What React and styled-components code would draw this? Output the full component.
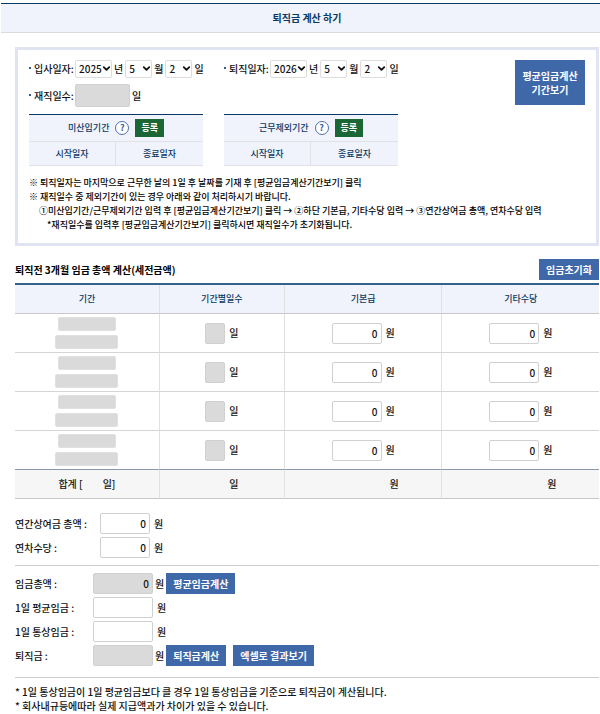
import React from "react";
import styled, { createGlobalStyle } from "styled-components";
import { ChevronDown } from "lucide-react";

const periodRows = [1, 2, 3, 4];

function DateSelect({ id, label, value, wide }) {
  return (
    <SelectWrap $wide={wide}>
      <Select id={id} aria-label={label} defaultValue={value}>
        <option>{value}</option>
      </Select>
      <ChevronDown size={11} strokeWidth={4} />
    </SelectWrap>
  );
}

function DateField({ id, label, year, month, day }) {
  return (
    <Field>
      <FieldLabel htmlFor={id}>{label}:</FieldLabel>
      <DateSelect id={id} value={year} wide />
      <DateUnit>년</DateUnit>
      <DateSelect label={`${label} 월`} value={month} />
      <DateUnit>월</DateUnit>
      <DateSelect label={`${label} 일`} value={day} />
      <DateUnit>일</DateUnit>
    </Field>
  );
}

function ExcludeTable({ title }) {
  return (
    <MiniTable>
      <thead>
        <tr>
          <th colSpan={2}>
            <MiniTitle>
              {title}
              <HelpButton type="button" aria-label={`${title} 도움말`}>?</HelpButton>
              <GreenButton type="button">등록</GreenButton>
            </MiniTitle>
          </th>
        </tr>
        <tr>
          <th>시작일자</th>
          <th>종료일자</th>
        </tr>
      </thead>
    </MiniTable>
  );
}

function App() {
  return (
    <>
      <GlobalStyle />
      <TitleBar>퇴직금 계산 하기</TitleBar>
      <Content>
        <InfoBox>
          <InfoTop>
            <Dates>
              <DateField id="join" label="입사일자" year="2025" month="5" day="2" />
              <DateField id="leave" label="퇴직일자" year="2026" month="5" day="2" />
              <Field>
                <FieldLabel htmlFor="days">재직일수:</FieldLabel>
                <DaysInput id="days" $width="55px" readOnly />
                <DateUnit>일</DateUnit>
              </Field>
            </Dates>
            <BigButton type="button">
              평균임금계산
              <br />
              기간보기
            </BigButton>
          </InfoTop>
          <MiniTables>
            <ExcludeTable title="미산입기간" />
            <ExcludeTable title="근무제외기간" />
          </MiniTables>
          <Notes>
            <Note>※ 퇴직일자는 마지막으로 근무한 날의 1일 후 날짜를 기재 후 [평균임금계산기간보기] 클릭</Note>
            <Note>※ 재직일수 중 제외기간이 있는 경우 아래와 같이 처리하시기 바랍니다.</Note>
            <Note $indent="10px">
              ①미산입기간/근무제외기간 입력 후 [평균임금계산기간보기] 클릭 → ②하단 기본급, 기타수당 입력 → ③연간상여금 총액, 연차수당 입력
            </Note>
            <Note $indent="18px">*재직일수를 입력후 [평균임금계산기간보기] 클릭하시면 재직일수가 초기화됩니다.</Note>
          </Notes>
        </InfoBox>

        <SectionHead>
          <h2>퇴직전 3개월 임금 총액 계산(세전금액)</h2>
          <Button type="button">임금초기화</Button>
        </SectionHead>
        <WageTable>
          <colgroup>
            <Col $width="24.8%" />
            <Col $width="21.4%" />
            <Col $width="27%" />
            <Col $width="26.8%" />
          </colgroup>
          <thead>
            <tr>
              <th>기간</th>
              <th>기간별일수</th>
              <th>기본급</th>
              <th>기타수당</th>
            </tr>
          </thead>
          <tbody>
            {periodRows.map((n) => (
              <tr key={n}>
                <td>
                  <Period>
                    <PeriodInput aria-label={`기간 ${n} 시작`} $width="58px" readOnly />
                    <PeriodInput aria-label={`기간 ${n} 종료`} $width="63px" readOnly />
                  </Period>
                </td>
                <td>
                  <Amount>
                    <Input aria-label={`기간 ${n} 일수`} $width="20px" readOnly />일
                  </Amount>
                </td>
                <td>
                  <Amount>
                    <Input aria-label={`기간 ${n} 기본급`} $width="50px" defaultValue="0" />원
                  </Amount>
                </td>
                <td>
                  <Amount>
                    <Input aria-label={`기간 ${n} 기타수당`} $width="50px" defaultValue="0" />원
                  </Amount>
                </td>
              </tr>
            ))}
          </tbody>
          <tfoot>
            <tr>
              <td>
                <Total>
                  <span>합계 [</span>
                  <span>일]</span>
                </Total>
              </td>
              <td><Sum $space="24px">일</Sum></td>
              <td><Sum $space="62px">원</Sum></td>
              <td><Sum $space="62px">원</Sum></td>
            </tr>
          </tfoot>
        </WageTable>

        <BonusForm>
          <FormRow>
            <label htmlFor="bonus">연간상여금 총액 :</label>
            <Input id="bonus" $width="50px" defaultValue="0" />
            <Unit>원</Unit>
          </FormRow>
          <FormRow>
            <label htmlFor="leavePay">연차수당 :</label>
            <Input id="leavePay" $width="50px" defaultValue="0" />
            <Unit>원</Unit>
          </FormRow>
        </BonusForm>
        <ResultForm>
          <FormRow>
            <label htmlFor="wageTotal">임금총액 :</label>
            <Input id="wageTotal" $width="60px" defaultValue="0" readOnly />
            <Unit $tight>원</Unit>
            <Button type="button">평균임금계산</Button>
          </FormRow>
          <FormRow>
            <label htmlFor="average">1일 평균임금 :</label>
            <Input id="average" $width="60px" />
            <Unit>원</Unit>
          </FormRow>
          <FormRow>
            <label htmlFor="ordinary">1일 통상임금 :</label>
            <Input id="ordinary" $width="60px" />
            <Unit>원</Unit>
          </FormRow>
          <FormRow>
            <label htmlFor="severance">퇴직금 :</label>
            <Input id="severance" $width="60px" readOnly />
            <Unit $tight>원</Unit>
            <ButtonGroup>
              <Button type="button">퇴직금계산</Button>
              <Button type="button">엑셀로 결과보기</Button>
            </ButtonGroup>
          </FormRow>
        </ResultForm>
        <Footnotes>
          <Note>* 1일 통상임금이 1일 평균임금보다 클 경우 1일 통상임금을 기준으로 퇴직금이 계산됩니다.</Note>
          <Note>* 회사내규등에따라 실제 지급액과가 차이가 있을 수 있습니다.</Note>
        </Footnotes>
      </Content>
    </>
  );
}

const GlobalStyle = createGlobalStyle`
  * {
    box-sizing: border-box;
  }
  body {
    margin: 0;
    background: #fff;
    color: #111;
    font-family: "Noto Sans CJK KR", "Noto Sans", sans-serif;
    font-size: 10px;
    font-weight: 500;
    line-height: 14px;
  }
  button, input, select {
    font: inherit;
    color: inherit;
    margin: 0;
  }
  button {
    cursor: pointer;
  }
`;

const TitleBar = styled.h1`
  margin: 3px 0 0 1px;
  padding: 7px 0;
  padding-left: 13px;
  border-top: 1px solid #0b3863;
  border-bottom: 1px solid #d9dbdf;
  background: #f0f3fc;
  color: #0b3863;
  font-size: 10px;
  line-height: 14px;
  text-align: center;
`;
const Content = styled.main`
  padding: 14px 1px 0 15px;
`;
const InfoBox = styled.section`
  border: 3px solid #e0e4f2;
  padding: 10px 11px;
`;
const InfoTop = styled.div`
  display: flex;
  justify-content: space-between;
  align-items: flex-start;
`;
const Dates = styled.div`
  display: grid;
  grid-template-columns: 174px 174px;
  column-gap: 21px;
  row-gap: 6px;
`;
const Field = styled.div`
  display: flex;
  align-items: center;
`;
const FieldLabel = styled.label`
  width: 46px;
  flex-shrink: 0;
  white-space: nowrap;
  &:before {
    content: "";
    display: inline-block;
    width: 2px;
    height: 2px;
    margin-right: 3px;
    background: #2d5d8e;
    vertical-align: 4px;
  }
`;
const SelectWrap = styled.span`
  position: relative;
  flex-shrink: 0;
  width: ${(props) => (props.$wide ? "37px" : "27px")};
  svg {
    position: absolute;
    top: 3px;
    right: 0;
    pointer-events: none;
  }
`;
const Select = styled.select`
  appearance: none;
  display: block;
  width: 100%;
  height: 18px;
  padding: 0 0 0 3px;
  border: 1px solid #ddd;
  border-radius: 2px;
  background-color: #fff;
`;
const DateUnit = styled.span`
  padding: 0 2px;
  flex-shrink: 0;
  white-space: nowrap;
`;
const Input = styled.input`
  width: ${(props) => props.$width};
  height: 21px;
  padding: 0 3px;
  border: 1px solid #d0d0d0;
  border-radius: 2px;
  background: ${(props) => (props.readOnly ? "#dadada" : "#fff")};
  text-align: right;
`;
const DaysInput = styled(Input)`
  height: 23px;
`;
const Button = styled.button`
  height: 21px;
  padding: 0 7px;
  border: 0;
  background: #3f68a9;
  color: #fff;
  font-weight: 700;
  white-space: nowrap;
`;
const BigButton = styled(Button)`
  min-width: 70px;
  height: 45px;
  flex-shrink: 0;
`;
const MiniTables = styled.div`
  display: grid;
  grid-template-columns: 174px 174px;
  column-gap: 21px;
  margin-top: 7px;
`;
const MiniTable = styled.table`
  width: 100%;
  border-collapse: separate;
  border-spacing: 0;
  border-top: 1px solid #0b3863;
  background: #f0f3fc;
  color: #0b3863;
  font-size: 9px;
  table-layout: fixed;
  th {
    height: 24px;
    padding: 0;
    border-bottom: 1px solid #e0e2e8;
    font-weight: 500;
  }
  tr:first-child th {
    height: 27px;
  }
  tr:last-child th:first-child {
    border-right: 1px solid #e0e2e8;
  }
`;
const MiniTitle = styled.div`
  display: flex;
  align-items: center;
  justify-content: center;
  gap: 6px;
`;
const HelpButton = styled.button`
  width: 14px;
  height: 14px;
  padding: 0;
  border: 1px solid #4c70ae;
  border-radius: 50%;
  background: #fff;
  color: #365f9f;
  font-size: 9px;
  font-weight: 700;
  line-height: 12px;
`;
const GreenButton = styled(Button)`
  height: 18px;
  padding: 0 6px;
  background: #1a6634;
`;
const Notes = styled.div`
  margin-top: 10px;
  padding-bottom: 1px;
  font-size: 9px;
  color: #000;
`;
const Note = styled.p`
  margin: 0;
  padding-left: ${(props) => props.$indent || 0};
`;
const SectionHead = styled.div`
  display: flex;
  align-items: center;
  justify-content: space-between;
  margin: 13px 0 3px;
  h2 {
    margin: 0;
    font-size: 10px;
    color: #000;
  }
`;
const WageTable = styled.table`
  width: 100%;
  border-collapse: separate;
  border-spacing: 0;
  border-top: 2px solid #35618d;
  table-layout: fixed;
  th, td {
    padding: 0;
    border-bottom: 1px solid #d5d5d5;
    border-right: 1px solid #e0e0e0;
    text-align: center;
  }
  th:last-child, td:last-child {
    border-right: 0;
  }
  th {
    height: 29px;
    background: #f0f3fc;
    border-bottom-color: #c8c8c8;
    color: #0b3863;
    font-size: 9px;
    font-weight: 500;
  }
  td {
    height: 39px;
  }
  tbody tr:last-child td {
    border-bottom-color: #8798a9;
  }
  tfoot td {
    height: 29px;
    background: #f6f6f6;
    border-bottom-color: #c8c8c8;
  }
`;
const Col = styled.col`
  width: ${(props) => props.$width};
`;
const Period = styled.div`
  display: flex;
  flex-direction: column;
  align-items: center;
  gap: 4px;
`;
const PeriodInput = styled.input`
  width: ${(props) => props.$width};
  height: 14px;
  padding: 0;
  border: 1px solid #e0e0e0;
  border-radius: 2px;
  background: #dadada;
`;
const Amount = styled.div`
  display: flex;
  align-items: center;
  justify-content: center;
  gap: 4px;
`;
const Total = styled.div`
  display: flex;
  justify-content: center;
  gap: 20px;
`;
const Sum = styled.div`
  padding-left: ${(props) => props.$space};
`;
const Form = styled.form`
  display: grid;
  row-gap: 3px;
  border-bottom: 1px solid #ccc;
  label {
    white-space: nowrap;
  }
`;
const BonusForm = styled(Form)`
  padding: 14px 0 7px;
  label {
    width: 85px;
  }
`;
const ResultForm = styled(Form)`
  padding: 7px 0 11px;
  label {
    width: 78px;
  }
`;
const FormRow = styled.div`
  display: flex;
  align-items: center;
`;
const Unit = styled.span`
  padding: ${(props) => (props.$tight ? "0 2px" : "0 4px")};
`;
const ButtonGroup = styled.div`
  display: flex;
  gap: 7px;
`;
const Footnotes = styled.footer`
  padding-top: 7px;
`;

export default App;
